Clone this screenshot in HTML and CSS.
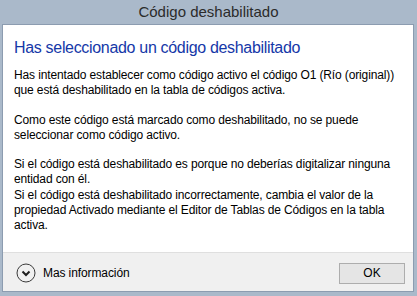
FILE: index.html
```html
<!DOCTYPE html>
<html lang="es">
<head>
<meta charset="utf-8">
<title>Código deshabilitado</title>
<link rel="stylesheet" href="styles.css">
</head>
<body>
<div class="window">
  <div class="titlebar">Código deshabilitado</div>
  <div class="client">
    <div class="content">
      <h1 class="instruction">Has seleccionado un código deshabilitado</h1>
      <p class="para">Has intentado establecer como código activo el código O1 (Río (original))<br>que está deshabilitado en la tabla de códigos activa.</p>
      <p class="para">Como este código está marcado como deshabilitado, no se puede<br>seleccionar como código activo.</p>
      <p class="para">Si el código está deshabilitado es porque no deberías digitalizar ninguna<br>entidad con él.<br>Si el código está deshabilitado incorrectamente, cambia el valor de la<br>propiedad Activado mediante el Editor de Tablas de Códigos en la tabla<br>activa.</p>
    </div>
    <div class="footer">
      <div class="more">
        <svg class="more-icon" width="20" height="20" viewBox="0 0 20 20" aria-hidden="true">
          <circle cx="10" cy="10" r="9" fill="none" stroke="#3a3a3a" stroke-width="1"/>
          <path d="M6.5 8.5 L10 12 L13.5 8.5" fill="none" stroke="#1e1e1e" stroke-width="2"/>
        </svg>
        <span class="more-label">Mas información</span>
      </div>
      <button class="btn">OK</button>
    </div>
  </div>
</div>
</body>
</html>
```

FILE: styles.css
```css
html, body {
  margin: 0;
  padding: 0;
}
body {
  width: 417px;
  height: 296px;
  overflow: hidden;
  background: #aab9ca;
  font-family: "Liberation Sans", Arial, sans-serif;
}
.window {
  width: 417px;
  height: 296px;
  display: flex;
  flex-direction: column;
}
.titlebar {
  height: 24px;
  line-height: 23px;
  text-align: center;
  font-size: 15px;
  color: #2b2b2b;
}
.client {
  flex: 1;
  margin: 0 3px 4px 2px;
  border: 1px solid #8c9cb0;
  display: flex;
  flex-direction: column;
  background: #f0f0f0;
}
.content {
  flex: 1;
  background: #ffffff;
  padding: 12px 11px 0 11px;
  border-bottom: 1px solid #dfdfdf;
}
.instruction {
  margin: 0 0 10px 0;
  font-size: 16px;
  font-weight: normal;
  line-height: 21px;
  letter-spacing: -0.32px;
  color: #1538a8;
  white-space: nowrap;
}
.para {
  margin: 0 0 14px 0;
  font-size: 12px;
  line-height: 15.3px;
  letter-spacing: -0.13px;
  color: #000000;
  white-space: nowrap;
}
.footer {
  height: 38px;
  display: flex;
  align-items: center;
  justify-content: space-between;
  padding: 0 8px 0 13px;
}
.more {
  display: flex;
  align-items: center;
  gap: 7px;
  padding-top: 2px;
}
.more-icon {
  display: block;
}
.more-label {
  font-size: 12px;
  letter-spacing: -0.1px;
  color: #000000;
}
.btn {
  width: 66px;
  height: 21px;
  margin-top: 2px;
  border: 1px solid #adadad;
  background: #e5e5e5;
  font-family: "Liberation Sans", Arial, sans-serif;
  font-size: 12px;
  color: #000000;
  padding: 0;
}
```
